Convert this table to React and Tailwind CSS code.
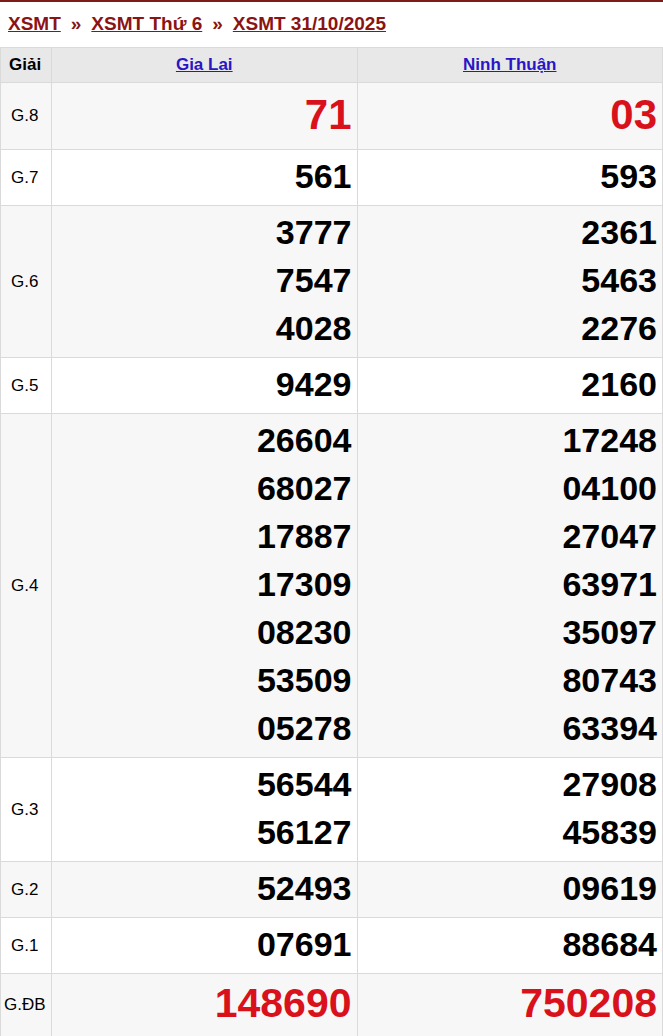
import React from "react";

const rows = [
  { name: "G.8", a: ["71"], b: ["03"], big: "g8" },
  { name: "G.7", a: ["561"], b: ["593"] },
  { name: "G.6", a: ["3777", "7547", "4028"], b: ["2361", "5463", "2276"] },
  { name: "G.5", a: ["9429"], b: ["2160"] },
  {
    name: "G.4",
    a: ["26604", "68027", "17887", "17309", "08230", "53509", "05278"],
    b: ["17248", "04100", "27047", "63971", "35097", "80743", "63394"],
  },
  { name: "G.3", a: ["56544", "56127"], b: ["27908", "45839"] },
  { name: "G.2", a: ["52493"], b: ["09619"] },
  { name: "G.1", a: ["07691"], b: ["88684"] },
  { name: "G.ĐB", a: ["148690"], b: ["750208"], big: "db" },
];

function Numbers({ list, big }) {
  let cls = "text-[34px] leading-[48px] text-black";
  if (big === "g8") cls = "text-[42px] leading-[59px] text-[#d9111b]";
  if (big === "db") cls = "text-[41px] leading-[54px] text-[#d9111b]";
  return (
    <td className={"border border-[#dadada] px-[5px] pt-[2px] text-right align-middle " + (big === "db" ? "pb-[8px]" : "pb-[5px]")}>
      {list.map((n, i) => (
        <div key={i} className={"font-bold " + cls}>
          {n}
        </div>
      ))}
    </td>
  );
}

export default function App() {
  return (
    <div className="w-[663px] bg-white border-t-2 border-[#7d1a1a] font-['Liberation_Sans',Arial,sans-serif]">
      <div className="h-[45px] flex items-center px-2 text-[19px] font-bold text-[#8b1313]">
        <a href="#" className="underline">XSMT</a>
        <span className="mx-[10px]">»</span>
        <a href="#" className="underline">XSMT Thứ 6</a>
        <span className="mx-[10px]">»</span>
        <a href="#" className="underline">XSMT 31/10/2025</a>
      </div>
      <table className="w-full border-collapse table-fixed">
        <colgroup>
          <col className="w-[51px]" />
          <col />
          <col />
        </colgroup>
        <thead>
          <tr className="bg-[#e8e8e8] h-[35px]">
            <th className="border border-[#dadada] text-left pl-2 text-[17px] font-bold text-black">Giải</th>
            <th className="border border-[#dadada] text-center text-[17px] font-bold">
              <a href="#" className="underline text-[#2a16c4]">Gia Lai</a>
            </th>
            <th className="border border-[#dadada] text-center text-[17px] font-bold">
              <a href="#" className="underline text-[#2a16c4]">Ninh Thuận</a>
            </th>
          </tr>
        </thead>
        <tbody>
          {rows.map((r, i) => (
            <tr key={r.name} className={i % 2 === 0 ? "bg-[#f7f7f7]" : "bg-white"}>
              <td
                className={
                  "border border-[#dadada] text-[17px] text-black align-middle whitespace-nowrap " +
                  (r.name === "G.ĐB" ? "pl-[3px] pb-[3px]" : "pl-[10px]")
                }
              >
                {r.name}
              </td>
              <Numbers list={r.a} big={r.big} />
              <Numbers list={r.b} big={r.big} />
            </tr>
          ))}
        </tbody>
      </table>
    </div>
  );
}
